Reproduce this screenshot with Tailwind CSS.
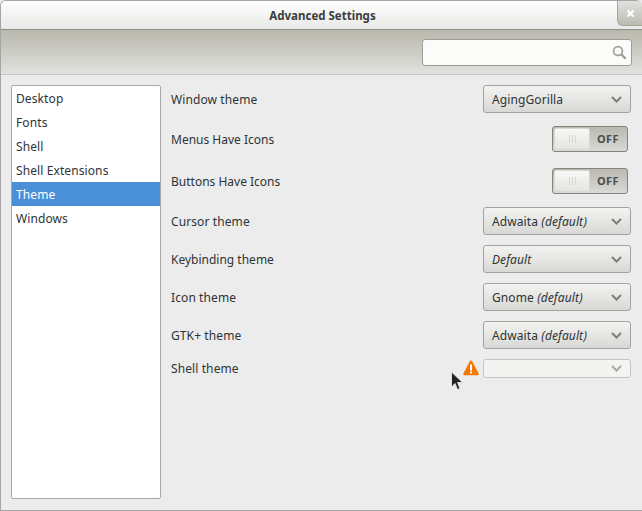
<!DOCTYPE html>
<html lang="en">
<head>
  <meta charset="UTF-8">
  <title>Advanced Settings</title>
  <script src="https://cdn.jsdelivr.net/npm/@tailwindcss/browser@4"></script>
</head>
<body class="bg-[#ececec] font-['Noto_Sans',sans-serif] text-[12px] text-[#2e3436] overflow-hidden">
  <div class="relative w-[642px] h-[511px] flex flex-col bg-[#ececec] border-l border-b border-t border-[#a5a5a5] rounded-t-md overflow-hidden">
    <!-- titlebar -->
    <div class="h-[29px] shrink-0 flex items-center justify-center bg-gradient-to-b from-[#ffffff] to-[#e8e8e6] border-b border-[#8f8f87]">
      <span class="font-bold text-[11.5px] text-[#3a3d3e] ml-[2px] mt-[1px]">Advanced Settings</span>
    </div>
    <div class="absolute right-0 top-0 w-[25px] h-[25px] bg-gradient-to-b from-[#e2e2de] to-[#bcbcb4] border-l border-b border-[#a5a59d] rounded-bl-md flex items-center justify-center">
      <svg width="9" height="9" viewBox="0 0 9 9"><path d="M1.5 1.5l6 6M7.5 1.5l-6 6" stroke="#ffffff" stroke-width="2.2" /></svg>
    </div>
    <!-- toolbar -->
    <div class="h-[45px] shrink-0 flex items-center justify-end pr-[10px] bg-gradient-to-b from-[#b8b8ad] to-[#e2e2df] border-b border-[#c4c4c0]">
      <div class="w-[210px] h-[27px] flex items-center justify-end pr-[4px] bg-[#fbfbfa] border border-[#9d9d95] rounded-[3px]">
        <svg width="15" height="15" viewBox="0 0 15 15" fill="none" stroke="#a0a09c"><circle cx="6" cy="6" r="4.4" stroke-width="1.7" /><path d="M9.3 9.3l4.4 4.4" stroke-width="2.4" /></svg>
      </div>
    </div>
    <!-- content -->
    <div class="flex-1 flex pl-[10px] pt-[10px] pb-[11px]">
      <ul class="w-[150px] bg-white border border-[#a8a8a8] rounded-[2px] tracking-[0.1px]">
        <li class="h-[24px] pl-[4px] pt-[1px] flex items-center">Desktop</li>
        <li class="h-[24px] pl-[4px] pt-[1px] flex items-center">Fonts</li>
        <li class="h-[24px] pl-[4px] pt-[1px] flex items-center">Shell</li>
        <li class="h-[24px] pl-[4px] pt-[1px] flex items-center">Shell Extensions</li>
        <li class="h-[24px] pl-[4px] pt-[1px] flex items-center bg-[#4a90d9] text-white">Theme</li>
        <li class="h-[24px] pl-[4px] pt-[1px] flex items-center">Windows</li>
      </ul>
      <div class="w-[460px] ml-[10px] flex flex-col gap-[10px] tracking-[0.1px]">
        <div class="h-[28px] flex items-center justify-between">
          <span class="mt-[2px]">Window theme</span>
          <div class="w-[148px] h-[28px] pl-[8px] pr-[8px] flex items-center justify-between bg-gradient-to-b from-[#f3f3f1] to-[#d8d9d6] border border-[#a3a39d] rounded-[3px]">
            <span class="mt-[1px]">AgingGorilla</span>
            <svg width="11" height="7" viewBox="0 0 11 7" fill="none" stroke="#7d7f7d" stroke-width="2"><path d="M1 1l4.5 4.5L10 1" /></svg>
          </div>
        </div>
        <div class="h-[32px] flex items-center justify-between">
          <span class="mt-[2px] tracking-normal">Menus Have Icons</span>
          <div class="w-[76px] h-[26px] mr-[3px] flex bg-gradient-to-b from-[#b9b9b1] to-[#d9d9d5] border border-[#85857d] rounded-[3px] p-[1px]">
            <div class="w-[36px] flex items-center justify-center gap-[2px] bg-gradient-to-b from-[#f8f8f7] to-[#e4e4e1] border border-[#d8d8d4] rounded-[2px]">
              <i class="block w-[1px] h-[8px] bg-[#d5d5d1]"></i><i class="block w-[1px] h-[8px] bg-[#d5d5d1]"></i><i class="block w-[1px] h-[8px] bg-[#d5d5d1]"></i>
            </div>
            <span class="flex-1 text-center font-bold text-[11px] tracking-[0.4px] leading-[22px] text-[#4c4e4d]">OFF</span>
          </div>
        </div>
        <div class="h-[32px] flex items-center justify-between">
          <span class="mt-[2px] tracking-normal">Buttons Have Icons</span>
          <div class="w-[76px] h-[26px] mr-[3px] flex bg-gradient-to-b from-[#b9b9b1] to-[#d9d9d5] border border-[#85857d] rounded-[3px] p-[1px]">
            <div class="w-[36px] flex items-center justify-center gap-[2px] bg-gradient-to-b from-[#f8f8f7] to-[#e4e4e1] border border-[#d8d8d4] rounded-[2px]">
              <i class="block w-[1px] h-[8px] bg-[#d5d5d1]"></i><i class="block w-[1px] h-[8px] bg-[#d5d5d1]"></i><i class="block w-[1px] h-[8px] bg-[#d5d5d1]"></i>
            </div>
            <span class="flex-1 text-center font-bold text-[11px] tracking-[0.4px] leading-[22px] text-[#4c4e4d]">OFF</span>
          </div>
        </div>
        <div class="h-[28px] flex items-center justify-between">
          <span class="mt-[2px]">Cursor theme</span>
          <div class="w-[148px] h-[28px] pl-[8px] pr-[8px] flex items-center justify-between bg-gradient-to-b from-[#f3f3f1] to-[#d8d9d6] border border-[#a3a39d] rounded-[3px]">
            <span class="mt-[1px]">Adwaita <em>(default)</em></span>
            <svg width="11" height="7" viewBox="0 0 11 7" fill="none" stroke="#7d7f7d" stroke-width="2"><path d="M1 1l4.5 4.5L10 1" /></svg>
          </div>
        </div>
        <div class="h-[28px] flex items-center justify-between">
          <span class="mt-[2px] tracking-normal">Keybinding theme</span>
          <div class="w-[148px] h-[28px] pl-[8px] pr-[8px] flex items-center justify-between bg-gradient-to-b from-[#f3f3f1] to-[#d8d9d6] border border-[#a3a39d] rounded-[3px]">
            <em class="mt-[1px]">Default</em>
            <svg width="11" height="7" viewBox="0 0 11 7" fill="none" stroke="#7d7f7d" stroke-width="2"><path d="M1 1l4.5 4.5L10 1" /></svg>
          </div>
        </div>
        <div class="h-[28px] flex items-center justify-between">
          <span class="mt-[2px]">Icon theme</span>
          <div class="w-[148px] h-[28px] pl-[8px] pr-[8px] flex items-center justify-between bg-gradient-to-b from-[#f3f3f1] to-[#d8d9d6] border border-[#a3a39d] rounded-[3px]">
            <span class="mt-[1px]">Gnome <em>(default)</em></span>
            <svg width="11" height="7" viewBox="0 0 11 7" fill="none" stroke="#7d7f7d" stroke-width="2"><path d="M1 1l4.5 4.5L10 1" /></svg>
          </div>
        </div>
        <div class="h-[28px] flex items-center justify-between">
          <span class="mt-[2px]">GTK+ theme</span>
          <div class="w-[148px] h-[28px] pl-[8px] pr-[8px] flex items-center justify-between bg-gradient-to-b from-[#f3f3f1] to-[#d8d9d6] border border-[#a3a39d] rounded-[3px]">
            <span class="mt-[1px]">Adwaita <em>(default)</em></span>
            <svg width="11" height="7" viewBox="0 0 11 7" fill="none" stroke="#7d7f7d" stroke-width="2"><path d="M1 1l4.5 4.5L10 1" /></svg>
          </div>
        </div>
        <div class="h-[19px] flex items-center">
          <span class="flex-1 mt-[1px]">Shell theme</span>
          <svg class="mr-[4px] -mt-[2px]" width="16" height="16" viewBox="0 0 16 16"><path d="M8 0.5c.5 0 .9.3 1.2.8l6.4 12.3c.4.8-.1 1.6-1 1.6H1.4c-.9 0-1.4-.8-1-1.6L6.8 1.3C7.1.8 7.5.5 8 .5z" fill="#f57900" /><rect x="7" y="4.5" width="2" height="6" fill="#fff" /><rect x="7" y="11.5" width="2" height="2" fill="#fff" /></svg>
          <div class="w-[148px] h-[19px] pr-[8px] flex items-center justify-end bg-[#f3f3f1] border border-[#c4c4c0] rounded-[3px]">
            <svg width="11" height="7" viewBox="0 0 11 7" fill="none" stroke="#a8a8a6" stroke-width="2"><path d="M1 1l4.5 4.5L10 1" /></svg>
          </div>
        </div>
      </div>
    </div>
    <!-- mouse pointer over the window -->
    <svg class="absolute left-[449px] top-[370px]" width="14" height="21" viewBox="0 0 14 21"><path d="M1.5 1v15l3.5-3.5 2.5 6 2.5-1-2.5-6h5z" fill="#222" stroke="#ddd" stroke-width="1" /></svg>
  </div>
</body>
</html>
